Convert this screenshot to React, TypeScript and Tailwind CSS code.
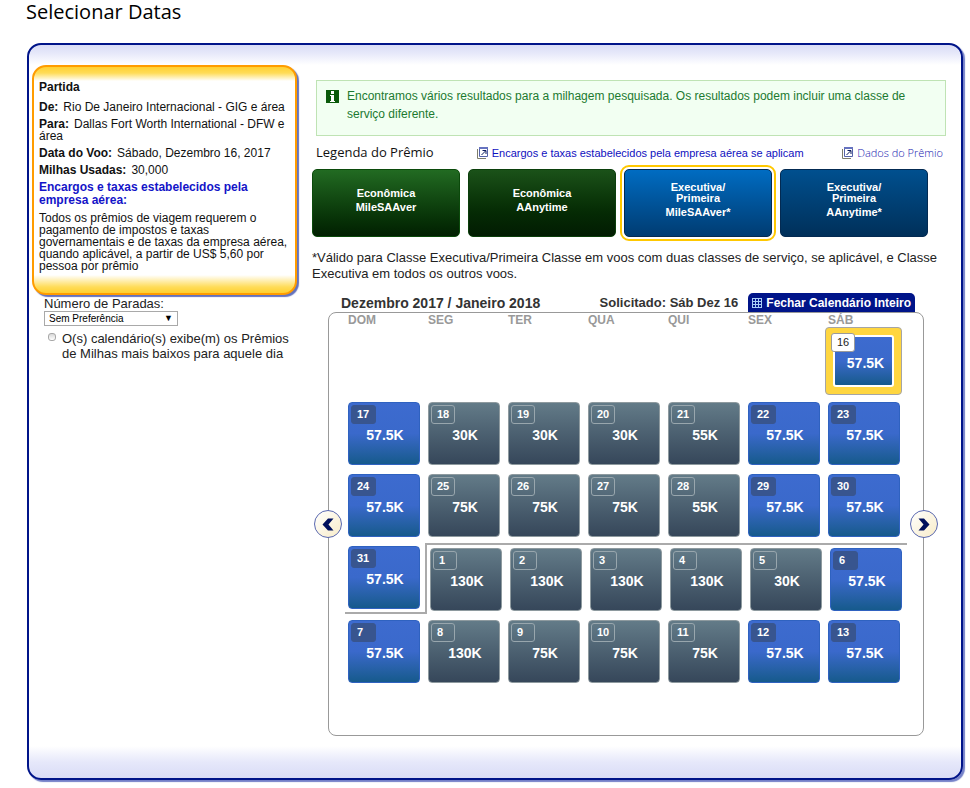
import { ReactNode } from 'react';
import clsx from 'clsx';

interface Day {
  day: number;
  miles: string;
}

interface Award {
  lines: string[];
  kind: string;
  color: string;
  selected?: boolean;
}

const weekDays = ['DOM', 'SEG', 'TER', 'QUA', 'QUI', 'SEX', 'SÁB'];

const awards: Award[] = [
  {
    lines: ['Econômica'],
    kind: 'MileSAAver',
    color: 'border-[#0b4a0b] from-[#226b22] to-[#022002]',
  },
  {
    lines: ['Econômica'],
    kind: 'AAnytime',
    color: 'border-[#0b3f0b] from-[#1b5219] via-[#052a04] via-65% to-[#021c02]',
  },
  {
    lines: ['Executiva/', 'Primeira'],
    kind: 'MileSAAver*',
    color: 'border-[#032a52] from-[#006cc2] to-[#003c72]',
    selected: true,
  },
  {
    lines: ['Executiva/', 'Primeira'],
    kind: 'AAnytime*',
    color: 'border-[#032a52] from-[#00508f] to-[#00305a]',
  },
];

const week2: Day[] = [
  { day: 17, miles: '57.5K' },
  { day: 18, miles: '30K' },
  { day: 19, miles: '30K' },
  { day: 20, miles: '30K' },
  { day: 21, miles: '55K' },
  { day: 22, miles: '57.5K' },
  { day: 23, miles: '57.5K' },
];

const week3: Day[] = [
  { day: 24, miles: '57.5K' },
  { day: 25, miles: '75K' },
  { day: 26, miles: '75K' },
  { day: 27, miles: '75K' },
  { day: 28, miles: '55K' },
  { day: 29, miles: '57.5K' },
  { day: 30, miles: '57.5K' },
];

const newMonth: Day[] = [
  { day: 1, miles: '130K' },
  { day: 2, miles: '130K' },
  { day: 3, miles: '130K' },
  { day: 4, miles: '130K' },
  { day: 5, miles: '30K' },
  { day: 6, miles: '57.5K' },
];

const week5: Day[] = [
  { day: 7, miles: '57.5K' },
  { day: 8, miles: '130K' },
  { day: 9, miles: '75K' },
  { day: 10, miles: '75K' },
  { day: 11, miles: '75K' },
  { day: 12, miles: '57.5K' },
  { day: 13, miles: '57.5K' },
];

const DayCell = ({ day, miles }: Day) => {
  // 57.5K is the saver level, everything else is greyed
  const saver = miles === '57.5K';

  return (
    <button
      className={clsx(
        'flex h-[63px] w-full flex-col rounded-[4px] border bg-linear-to-b p-[2px] text-white',
        saver
          ? 'border-[#2f62c0] from-[#3d6bcf] via-[#3a69cb] via-50% to-[#155a8c]'
          : 'border-[#8e9a9f] from-[#637b88] to-[#36475a]'
      )}
    >
      <span
        className={clsx(
          'h-[19px] rounded-[3px] border pl-[5px] text-left text-[11px] leading-4 font-bold',
          saver ? 'w-[25px] border-[#38558f] bg-[#38558f]' : 'w-6 border-[#98a6ad]'
        )}
      >
        {day}
      </span>
      <span className="w-full pl-[2px] text-center text-sm leading-[22px] font-bold">{miles}</span>
    </button>
  );
};

const SelectedCell = ({ day, miles }: Day) => (
  <button className="relative col-start-7 -mr-[2px] -ml-[3px] h-[68px] rounded-[4px] border border-[#a5a5a5] bg-[#ffd640] p-[7px]">
    <span className="flex h-[52px] items-center justify-center rounded-[3px] border-2 border-white bg-linear-to-b from-[#3d6bcf] via-[#3a69cb] via-50% to-[#155a8c] pt-1 pl-1 text-sm font-bold text-white">
      {miles}
    </span>
    <span className="absolute top-[5px] left-[5px] h-[19px] w-6 rounded-[3px] border border-[#9a9a9a] bg-white pl-[5px] text-left text-[11px] leading-4 text-[#222]">
      {day}
    </span>
  </button>
);

const Week = ({ days }: { days: Day[] }) => (
  <div className="grid grid-cols-7 gap-x-2">
    {days.map((d) => (
      <DayCell key={d.day} {...d} />
    ))}
  </div>
);

const PopupIcon = () => (
  <svg className="h-3 w-[11px] shrink-0" viewBox="0 0 11 12" fill="none">
    <path d="M0.500 2v9.500H9" stroke="#7d7d6c" />
    <path d="M2.500 0.500h8v9h-8z" fill="#fff" stroke="#5563a8" />
    <path d="M2 1h9" stroke="#6673c0" strokeWidth="2" />
    <path d="M4.500 8l4-4M5.500 3.500H9V7" stroke="#0a1a5c" />
  </svg>
);

const InfoIcon = () => (
  <svg className="mt-[3px] h-[13px] w-[13px] shrink-0" viewBox="0 0 13 13" shapeRendering="crispEdges">
    <rect width="13" height="13" rx="1" fill="#0b5a0b" />
    <path d="M5 1h3v3H5zM4 5h4v6h1v1H4v-1h1V6H4z" fill="#fff" />
  </svg>
);

const CalendarIcon = () => (
  <svg className="h-[10px] w-[10px] shrink-0" viewBox="0 0 10 10" fill="none" shapeRendering="crispEdges">
    <path d="M0.500 0.500h9v9h-9zM3.500 0v10M6.500 0v10M0 3.500h10M0 6.500h10" stroke="#a9cdf5" />
  </svg>
);

const Arrow = ({ side, label }: { side: 'left' | 'right'; label: string }) => (
  <button
    aria-label={label}
    className={clsx(
      'absolute top-1/2 flex h-7 w-7 -translate-y-1/2 items-center justify-center rounded-full border border-[#5a68b0] bg-linear-to-br from-white to-[#f8ecc8]',
      side === 'left' ? '-left-[15px]' : '-right-[15px]'
    )}
  >
    <svg className="h-[13px] w-3" viewBox="0 0 12 13">
      <path
        d={
          side === 'left'
            ? 'M6 0.500h5.500L6.500 6.500l5 6H6L0.500 6.500z'
            : 'M0.500 0.500H6L11.500 6.500 6 12.500H0.500l5-6z'
        }
        fill="#00105c"
      />
    </svg>
  </button>
);

const Field = ({ label, children }: { label: string; children: ReactNode }) => (
  <p className="mt-[5px]">
    <strong className="mr-[5px]">{label}</strong>
    {children}
  </p>
);

const TripSummary = () => (
  <section className="rounded-[14px] border-2 border-[#ff9c00] bg-white bg-[linear-gradient(to_bottom,#ffd030_0,#ffdc58_6px,#fff_14px,#fff_calc(100%-18px),#ffdc58_calc(100%-6px),#ffd030_100%)] pt-[14px] pr-px pb-[21px] pl-[5px] text-xs leading-3 text-[#111] shadow-[2px_2px_1px_#6472bd]">
    <h2 className="mb-2 font-bold">Partida</h2>
    <Field label="De:">Rio De Janeiro Internacional - GIG e área</Field>
    <Field label="Para:">Dallas Fort Worth International - DFW e área</Field>
    <Field label="Data do Voo:">Sábado, Dezembro 16, 2017</Field>
    <Field label="Milhas Usadas:">30,000</Field>
    <p className="mt-[5px] pr-8 leading-[13px] font-bold">
      <a href="#" className="text-[#1414c8]">Encargos e taxas estabelecidos pela empresa aérea:</a>
    </p>
    <p className="mt-[5px]">
      Todos os prêmios de viagem requerem o pagamento de impostos e taxas governamentais e de taxas da
      empresa aérea, quando aplicável, a partir de US$ 5,60 por pessoa por prêmio
    </p>
  </section>
);

const Filters = () => (
  <div className="mt-[2px] pl-3 text-[13px] leading-[15px] text-[#222]">
    <label htmlFor="stops" className="block leading-[14px]">
      Número de Paradas:
    </label>
    <div className="relative w-[134px]">
      <select
        id="stops"
        className="block h-[15px] w-full appearance-none border border-[#a9a9a9] bg-white pl-1 text-[10px] leading-3 text-black"
      >
        <option>Sem Preferência</option>
      </select>
      <span className="pointer-events-none absolute top-0 right-[5px] text-[9px] leading-[14px] text-black">▼</span>
    </div>
    <div className="mt-[5px] flex gap-[6px] pl-1">
      <input
        id="lowest"
        type="radio"
        className="mt-[2px] h-2 w-2 shrink-0 appearance-none rounded-[3px] border border-[#a8a8a8] bg-linear-to-b from-[#d8d8d8] to-white"
      />
      <label htmlFor="lowest">O(s) calendário(s) exibe(m) os Prêmios de Milhas mais baixos para aquele dia</label>
    </div>
  </div>
);

const AwardLegend = () => (
  <>
    <div className="mt-2 mr-[18px] ml-1 flex h-[18px] items-center">
      <h2 className="font-['Open_Sans',sans-serif] text-[13px] text-[#111]">Legenda do Prêmio</h2>
      <a href="#" className="ml-[43px] flex items-center gap-1 text-[11px] text-[#1010c0]">
        <PopupIcon />
        Encargos e taxas estabelecidos pela empresa aérea se aplicam
      </a>
      <a
        href="#"
        className="ml-auto flex items-center gap-1 font-['Open_Sans',sans-serif] text-[11px] font-light text-[#2020b0]"
      >
        <PopupIcon />
        Dados do Prêmio
      </a>
    </div>
    <div className="mt-[7px] mr-[33px] grid grid-cols-4 gap-2">
      {awards.map((award) => (
        <button
          key={award.lines[0] + award.kind}
          className={clsx(
            'flex h-[68px] flex-col items-center rounded-[5px] border bg-linear-to-b text-[11px] leading-[11px] font-bold text-white',
            award.color,
            award.lines.length > 1 ? 'pt-3' : 'pt-[18px]',
            award.selected && 'outline-2 outline-offset-2 outline-[#ffc800]'
          )}
        >
          {award.lines.map((line) => (
            <span key={line}>{line}</span>
          ))}
          <span className="mt-[3px]">{award.kind}</span>
        </button>
      ))}
    </div>
  </>
);

const Calendar = () => (
  <div className="mt-[11px] mr-[37px] ml-4">
    <div className="flex h-[19px] items-end pr-[9px] pl-[13px] text-[#333]">
      <h2 className="text-sm leading-[18px] font-bold">Dezembro 2017 / Janeiro 2018</h2>
      <p className="ml-auto text-[13px] leading-[18px] font-bold">Solicitado: Sáb Dez 16</p>
      <button className="ml-[10px] flex h-[19px] items-center gap-1 rounded-t-[5px] bg-[#001489] px-1 text-xs font-bold text-white">
        <CalendarIcon />
        Fechar Calendário Inteiro
      </button>
    </div>
    <div className="relative rounded-[8px] border border-[#999] pr-[23px] pb-[52px] pl-[19px]">
      <div className="grid grid-cols-7 gap-x-2 text-xs leading-[14px] font-bold text-[#999]">
        {weekDays.map((name) => (
          <span key={name}>{name}</span>
        ))}
      </div>
      <div className="grid grid-cols-7 gap-x-2">
        <SelectedCell day={16} miles="57.5K" />
      </div>
      <div className="mt-[7px] flex flex-col gap-[9px]">
        <Week days={week2} />
        <Week days={week3} />
      </div>
      {/* the grey line steps round the first day of the new month */}
      <div className="my-[6px] -mr-[7px] -ml-[3px] grid grid-cols-[82fr_480fr]">
        <div className="border-r-2 border-b-2 border-[#aaa] pt-[3px] pr-[5px] pb-[3px] pl-[3px]">
          <DayCell day={31} miles="57.5K" />
        </div>
        <div className="grid grid-cols-6 content-start gap-x-2 border-t-2 border-[#aaa] pt-[3px] pr-[5px] pl-[3px]">
          {newMonth.map((d) => (
            <DayCell key={d.day} {...d} />
          ))}
        </div>
      </div>
      <Week days={week5} />
      <Arrow side="left" label="Semanas anteriores" />
      <Arrow side="right" label="Próximas semanas" />
    </div>
  </div>
);

export default function App() {
  return (
    <div className="bg-white pr-[7px] pb-2 pl-[27px] font-['Liberation_Sans',Arial,sans-serif]">
      <h1 className="-ml-px pb-[19px] font-['Open_Sans',sans-serif] text-xl leading-6 text-black">
        Selecionar Datas
      </h1>
      <main className="flex items-start rounded-[14px] border-2 border-[#001489] bg-[linear-gradient(to_bottom,#d9dcf6_0,#e6e8fa_8px,#fff_20px,#fff_calc(100%-32px),#e6e8fa_calc(100%-16px),#d9dcf6_100%)] pt-5 pb-[42px] pl-[3px] shadow-[2px_2px_1px_#7480c8]">
        <aside className="w-[265px] shrink-0">
          <TripSummary />
          <Filters />
        </aside>
        <div className="min-w-0 flex-1 pt-[15px] pl-[15px]">
          <div className="mr-[15px] ml-1 flex gap-2 border border-[#bfe3b4] bg-[#f2fff2] pt-[6px] pr-4 pb-3 pl-[9px] text-xs leading-[18px] text-[#1c7a30]">
            <InfoIcon />
            <p>
              Encontramos vários resultados para a milhagem pesquisada. Os resultados podem incluir uma classe de
              serviço diferente.
            </p>
          </div>
          <AwardLegend />
          <p className="mt-[13px] text-[13px] leading-4 text-[#222]">
            *Válido para Classe Executiva/Primeira Classe em voos com duas classes de serviço, se aplicável, e Classe
            Executiva em todos os outros voos.
          </p>
          <Calendar />
        </div>
      </main>
    </div>
  );
}
